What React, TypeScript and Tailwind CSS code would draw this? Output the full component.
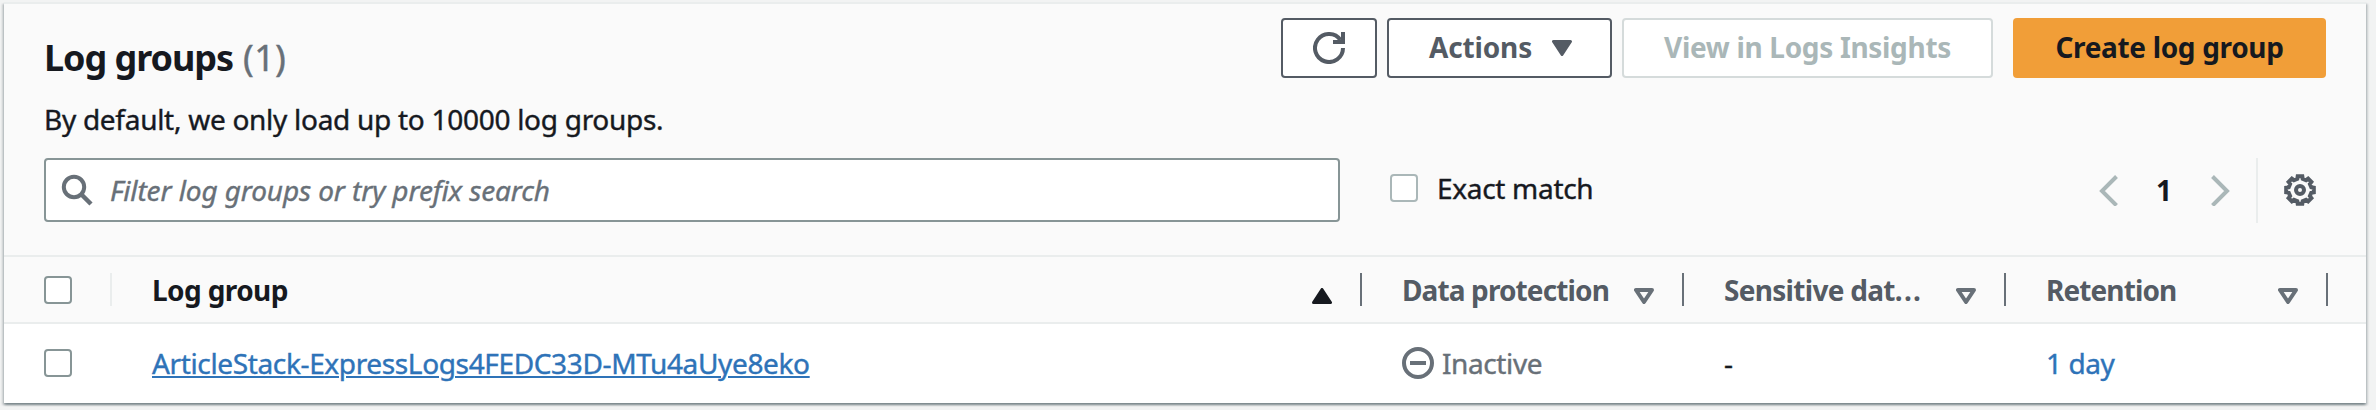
import type { ReactNode } from "react";

const gearPoints = Array.from({ length: 8 }, (_, i) => {
  const base = i * 45;
  return [
    [-9.5, 14],
    [9.5, 14],
    [13.5, 11.6],
    [31.5, 11.6],
  ]
    .map(([offset, radius]) => {
      const angle = ((base + offset - 90) * Math.PI) / 180;
      return `${(16 + radius * Math.cos(angle)).toFixed(2)},${(16 + radius * Math.sin(angle)).toFixed(2)}`;
    })
    .join(" ");
}).join(" ");

function GearIcon() {
  return (
    <svg className="size-8" viewBox="0 0 32 32" fill="none" stroke="#545b64" strokeWidth="4">
      <polygon points={gearPoints} />
      <circle cx="16" cy="16" r="4" />
    </svg>
  );
}

function RefreshIcon() {
  return (
    <svg className="size-8" viewBox="0 0 32 32" fill="none" stroke="#545b64" strokeWidth="4">
      <path d="M30 16A14 14 0 1 1 27.5 8" />
      <path d="M30 0V10H20" />
    </svg>
  );
}

function SearchIcon() {
  return (
    <svg className="size-8 shrink-0" viewBox="0 0 32 32" fill="none" stroke="#687078" strokeWidth="4">
      <circle cx="13" cy="13" r="10.2" />
      <path d="M20 20L30 30" strokeWidth="4.5" />
    </svg>
  );
}

function InactiveIcon() {
  return (
    <svg className="size-8 shrink-0" viewBox="0 0 32 32" fill="none" stroke="#687078" strokeWidth="4">
      <circle cx="16" cy="16" r="14" />
      <path d="M8 16H24" />
    </svg>
  );
}

function Chevron({ right = false }: { right?: boolean }) {
  return (
    <svg className="h-8 w-5" viewBox="0 0 20 32" fill="none" stroke="#aab7b8" strokeWidth="4">
      <path d={right ? "M1.5 2.5L16 17L1.5 31.5" : "M18.5 2.5L4 17L18.5 31.5"} />
    </svg>
  );
}

function SortIcon({ ascending = false }: { ascending?: boolean }) {
  return (
    <svg className="mt-3 ml-auto h-4 w-5 shrink-0" viewBox="0 0 20 16" strokeLinejoin="round">
      {ascending ? (
        <polygon points="10,1.5 18.5,14.5 1.5,14.5" fill="#16191f" stroke="#16191f" strokeWidth="3" />
      ) : (
        <polygon points="2,2 18,2 10,14" fill="none" stroke="#687078" strokeWidth="4" />
      )}
    </svg>
  );
}

function Checkbox({ light = false }: { light?: boolean }) {
  return (
    <span
      role="checkbox"
      aria-checked="false"
      className={`block size-7 shrink-0 rounded-[4px] border-2 bg-white ${light ? "border-[#aab7b8]" : "border-[#879596]"}`}
    />
  );
}

function HeaderCell({ children, ascending = false }: { children: ReactNode; ascending?: boolean }) {
  return (
    <div className={`flex items-center pl-10 font-bold ${ascending ? "text-[#16191f]" : "text-[#545b64]"}`}>
      {children}
      <SortIcon ascending={ascending} />
      <span className="ml-7 h-[33px] w-0.5 bg-[#687078]" />
    </div>
  );
}

const columns = "grid grid-cols-[108px_1250px_322px_322px_322px_38px]";

export default function App() {
  return (
    <div className="h-[410px] w-[2376px] overflow-hidden bg-[#f2f3f3] pt-0.5 pl-1 font-['Noto_Sans',sans-serif] text-[28px] leading-9 whitespace-nowrap text-[#16191f]">
      <div className="w-[2362px] border-t-2 border-[#eaeded] bg-white shadow-[0_2px_2px_0_rgba(0,28,36,0.3),2px_2px_2px_0_rgba(0,28,36,0.15),-2px_2px_2px_0_rgba(0,28,36,0.15)]">
        <header className="h-[253px] border-b-2 border-[#eaeded] bg-[#fafafa] px-10 pt-3.5">
          <div className="flex h-[124px] justify-between">
            <div>
              <h2 className="flex h-[78px] items-center pt-0.5 text-[36px] font-bold tracking-[-1.05px]">
                Log groups
                <span className="ml-[10px] font-normal tracking-[0.3px] text-[#687078] [-webkit-text-stroke:0.4px]">
                  (1)
                </span>
              </h2>
              <p className="flex h-[46px] items-center tracking-[-0.28px] [-webkit-text-stroke:0.4px]">
                By default, we only load up to 10000 log groups.
              </p>
            </div>
            <div className="flex h-[60px] items-stretch font-bold text-[#545b64]">
              <button className="flex w-24 items-center justify-center rounded-[4px] border-2 border-[#545b64] bg-white">
                <RefreshIcon />
              </button>
              <button className="ml-2.5 flex w-[225px] items-center rounded-[4px] border-2 border-[#545b64] bg-white pb-0.5 pl-10 tracking-[-0.15px]">
                Actions
                <svg className="mt-0.5 ml-5 h-4 w-5" viewBox="0 0 20 16" strokeLinejoin="round">
                  <polygon points="1.5,1.5 18.5,1.5 10,14.5" fill="#545b64" stroke="#545b64" strokeWidth="3" />
                </svg>
              </button>
              <button className="ml-2.5 w-[371px] rounded-[4px] border-2 border-[#d5dbdb] bg-white pb-0.5 tracking-[-0.32px] text-[#aab7b8]">
                View in Logs Insights
              </button>
              <button className="ml-5 w-[313px] rounded-[4px] bg-[#f19e38] pb-0.5 tracking-[-0.33px] text-[#16191f]">
                Create log group
              </button>
            </div>
          </div>

          <div className="mt-4 flex h-16 items-center">
            <div className="flex h-16 w-[1296px] items-center rounded-[4px] border-2 border-[#879596] bg-white pl-[15px]">
              <SearchIcon />
              <span className="ml-[17px] tracking-[-0.12px] text-[#687078] italic [-webkit-text-stroke:0.4px]">
                Filter log groups or try prefix search
              </span>
            </div>
            <label className="ml-[50px] flex items-center gap-[19px] pb-1 tracking-[-0.3px]">
              <Checkbox light />
              <span className="-mt-px [-webkit-text-stroke:0.4px]">Exact match</span>
            </label>
            <nav className="mr-2.5 ml-auto flex h-16 items-center">
              <Chevron />
              <span className="ml-[38px] w-[17px] font-bold">1</span>
              <span className="ml-[38px]">
                <Chevron right />
              </span>
              <span className="ml-[25px] h-[65px] w-0.5 bg-[#eaeded]" />
              <span className="ml-[26px]">
                <GearIcon />
              </span>
            </nav>
          </div>
        </header>

        <div className={`${columns} h-[67px] border-b-2 border-[#eaeded] bg-[#fafafa]`}>
          <div className="flex items-center justify-between pl-10">
            <Checkbox />
            <span className="h-[33px] w-0.5 bg-[#eaeded]" />
          </div>
          <HeaderCell ascending>
            <span className="tracking-[-0.6px]">Log group</span>
          </HeaderCell>
          <HeaderCell>
            <span className="tracking-[-0.88px]">Data protection</span>
          </HeaderCell>
          <HeaderCell>
            <span className="tracking-[-0.7px]">
              Sensitive dat<span className="tracking-[1.2px]">...</span>
            </span>
          </HeaderCell>
          <HeaderCell>
            <span className="tracking-[-0.9px]">Retention</span>
          </HeaderCell>
        </div>

        <div className={`${columns} h-[79px] items-center pb-px [-webkit-text-stroke:0.4px]`}>
          <div className="pl-10">
            <Checkbox />
          </div>
          <div className="pl-10">
            <a className="tracking-[-0.36px] text-[#2e73b8] underline decoration-2 underline-offset-2">
              ArticleStack-ExpressLogs4FEDC33D-MTu4aUye8eko
            </a>
          </div>
          <div className="flex items-center gap-2 pl-10 tracking-[-0.4px] text-[#687078]">
            <InactiveIcon />
            Inactive
          </div>
          <div className="pl-10">-</div>
          <div className="pl-10 tracking-[-0.4px] text-[#2e73b8]">1 day</div>
        </div>
      </div>
    </div>
  );
}
